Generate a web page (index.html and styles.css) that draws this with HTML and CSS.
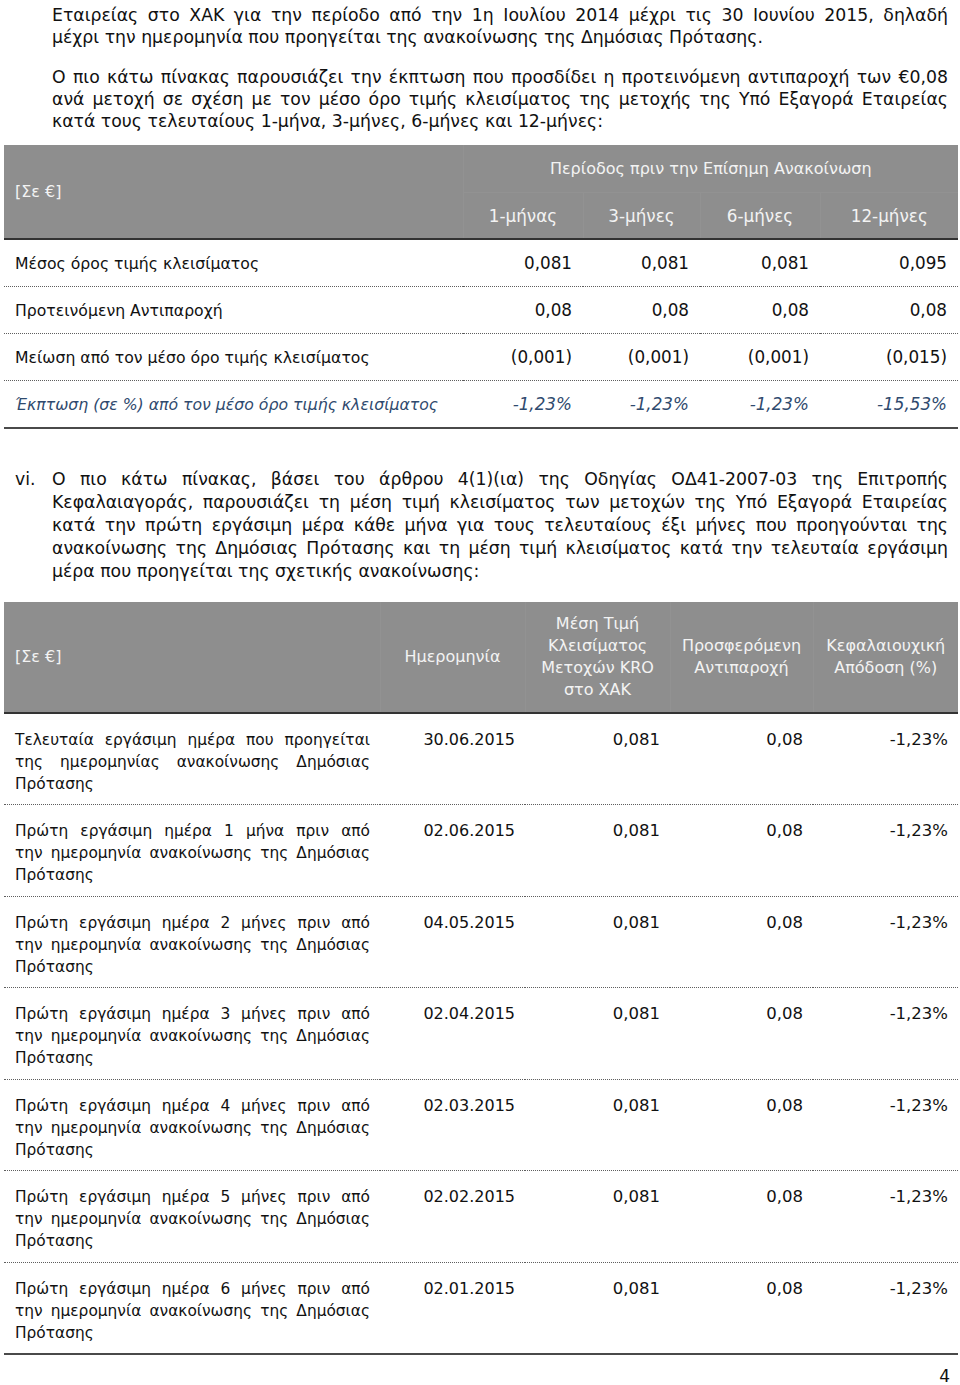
FILE: index.html
```html
<!DOCTYPE html>
<html lang="el">
<head>
<meta charset="utf-8">
<title>Πίνακες</title>
<link rel="stylesheet" href="styles.css">
</head>
<body>
<div class="page">
  <p class="para first"><span class="jline">Εταιρείας στο ΧΑΚ για την περίοδο από την 1η Ιουλίου 2014 μέχρι τις 30 Ιουνίου 2015, δηλαδή</span>μέχρι την ημερομηνία που προηγείται της ανακοίνωσης της Δημόσιας Πρότασης.</p>
  <p class="para second">Ο πιο κάτω πίνακας παρουσιάζει την έκπτωση που προσδίδει η προτεινόμενη αντιπαροχή των €0,08 ανά μετοχή σε σχέση με τον μέσο όρο τιμής κλεισίματος της μετοχής της Υπό Εξαγορά Εταιρείας κατά τους τελευταίους 1-μήνα, 3-μήνες, 6-μήνες και 12-μήνες:</p>

  <table class="t1">
    <colgroup>
      <col class="c1a"><col class="c1b"><col class="c1c"><col class="c1d"><col class="c1e">
    </colgroup>
    <thead>
      <tr class="h-top">
        <th rowspan="2" class="lbl">[Σε €]</th>
        <th colspan="4" class="period">Περίοδος πριν την Επίσημη Ανακοίνωση</th>
      </tr>
      <tr class="h-sub">
        <th>1-μήνας</th><th>3-μήνες</th><th>6-μήνες</th><th>12-μήνες</th>
      </tr>
    </thead>
    <tbody>
      <tr><td class="lbl">Μέσος όρος τιμής κλεισίματος</td><td>0,081</td><td>0,081</td><td>0,081</td><td>0,095</td></tr>
      <tr><td class="lbl">Προτεινόμενη Αντιπαροχή</td><td>0,08</td><td>0,08</td><td>0,08</td><td>0,08</td></tr>
      <tr><td class="lbl">Μείωση από τον μέσο όρο τιμής κλεισίματος</td><td>(0,001)</td><td>(0,001)</td><td>(0,001)</td><td>(0,015)</td></tr>
      <tr class="pct"><td class="lbl">Έκπτωση (σε %) από τον μέσο όρο τιμής κλεισίματος</td><td>-1,23%</td><td>-1,23%</td><td>-1,23%</td><td>-15,53%</td></tr>
    </tbody>
  </table>

  <div class="item">
    <span class="marker">vi.</span>
    <p class="item-text">Ο πιο κάτω πίνακας, βάσει του άρθρου 4(1)(ια) της Οδηγίας ΟΔ41-2007-03 της Επιτροπής Κεφαλαιαγοράς, παρουσιάζει τη μέση τιμή κλεισίματος των μετοχών της Υπό Εξαγορά Εταιρείας κατά την πρώτη εργάσιμη μέρα κάθε μήνα για τους τελευταίους έξι μήνες που προηγούνται της ανακοίνωσης της Δημόσιας Πρότασης και τη μέση τιμή κλεισίματος κατά την τελευταία εργάσιμη μέρα που προηγείται της σχετικής ανακοίνωσης:</p>
  </div>

  <table class="t2">
    <colgroup>
      <col class="c2a"><col class="c2b"><col class="c2c"><col class="c2d"><col class="c2e">
    </colgroup>
    <thead>
      <tr>
        <th class="lbl">[Σε €]</th>
        <th>Ημερομηνία</th>
        <th>Μέση Τιμή Κλεισίματος Μετοχών KRO στο ΧΑΚ</th>
        <th>Προσφερόμενη Αντιπαροχή</th>
        <th>Κεφαλαιουχική Απόδοση (%)</th>
      </tr>
    </thead>
    <tbody>
      <tr><td class="lbl">Τελευταία εργάσιμη ημέρα που προηγείται<br>της ημερομηνίας ανακοίνωσης Δημόσιας<br>Πρότασης</td><td class="date">30.06.2015</td><td>0,081</td><td>0,08</td><td>-1,23%</td></tr>
      <tr><td class="lbl">Πρώτη εργάσιμη ημέρα 1 μήνα πριν από<br>την ημερομηνία ανακοίνωσης της Δημόσιας<br>Πρότασης</td><td class="date">02.06.2015</td><td>0,081</td><td>0,08</td><td>-1,23%</td></tr>
      <tr><td class="lbl">Πρώτη εργάσιμη ημέρα 2 μήνες πριν από<br>την ημερομηνία ανακοίνωσης της Δημόσιας<br>Πρότασης</td><td class="date">04.05.2015</td><td>0,081</td><td>0,08</td><td>-1,23%</td></tr>
      <tr><td class="lbl">Πρώτη εργάσιμη ημέρα 3 μήνες πριν από<br>την ημερομηνία ανακοίνωσης της Δημόσιας<br>Πρότασης</td><td class="date">02.04.2015</td><td>0,081</td><td>0,08</td><td>-1,23%</td></tr>
      <tr><td class="lbl">Πρώτη εργάσιμη ημέρα 4 μήνες πριν από<br>την ημερομηνία ανακοίνωσης της Δημόσιας<br>Πρότασης</td><td class="date">02.03.2015</td><td>0,081</td><td>0,08</td><td>-1,23%</td></tr>
      <tr><td class="lbl">Πρώτη εργάσιμη ημέρα 5 μήνες πριν από<br>την ημερομηνία ανακοίνωσης της Δημόσιας<br>Πρότασης</td><td class="date">02.02.2015</td><td>0,081</td><td>0,08</td><td>-1,23%</td></tr>
      <tr><td class="lbl">Πρώτη εργάσιμη ημέρα 6 μήνες πριν από<br>την ημερομηνία ανακοίνωσης της Δημόσιας<br>Πρότασης</td><td class="date">02.01.2015</td><td>0,081</td><td>0,08</td><td>-1,23%</td></tr>
    </tbody>
  </table>

  <div class="pagenum">4</div>
</div>
</body>
</html>
```

FILE: styles.css
```css
html, body {
  margin: 0;
  padding: 0;
  background: #ffffff;
}

body {
  font-family: "DejaVu Sans", Verdana, sans-serif;
  color: #111111;
  font-size: 17.3px;
}

.page {
  width: 960px;
  padding-top: 4px;
}

.para {
  margin: 0 12px 0 52px;
  line-height: 22px;
  text-align: justify;
}

.para .jline {
  display: block;
  text-align: justify;
  text-align-last: justify;
}

.para.second {
  margin-top: 18px;
}

/* ---------- Table 1 ---------- */
table {
  border-collapse: collapse;
  table-layout: fixed;
  margin-left: 4px;
  width: 954px;
  font-size: 16.8px;
}

.t1 {
  margin-top: 13px;
}

.c1a { width: 459px; }
.c1b { width: 120px; }
.c1c { width: 117px; }
.c1d { width: 120px; }
.c1e { width: 138px; }

.t1 thead th {
  background: #8e8e8e;
  color: #f3f3f3;
  font-weight: normal;
  font-size: 16px;
  text-align: center;
  padding: 0;
}

.t1 .h-sub th {
  font-size: 16.8px;
}

.t1 .h-top th.lbl {
  text-align: left;
  padding-left: 11px;
  border-right: 1px solid #929292;
  border-bottom: 2px solid #333333;
}

.t1 .h-top th.period {
  height: 47px;
  border-bottom: 1px solid #929292;
}

.t1 .h-sub th {
  height: 45px;
  border-bottom: 2px solid #333333;
}

.t1 .h-sub th + th {
  border-left: 1px solid #929292;
}

.t1 tbody td {
  height: 46px;
  padding: 0 11px 0 0;
  text-align: right;
  border-bottom: 1px dotted #5e5e5e;
}

.t1 tbody td.lbl {
  text-align: left;
  padding-left: 11px;
  font-size: 15.7px;
}

.t1 tbody tr.pct td {
  color: #2f4a6e;
  font-style: italic;
  border-bottom: 2px solid #4a4a4a;
}

/* ---------- Item vi ---------- */
.item {
  display: flex;
  margin-top: 39px;
  line-height: 23px;
}

.marker {
  padding-left: 15px;
  box-sizing: border-box;
  flex: 0 0 52px;
}

.item-text {
  margin: 0 12px 0 0;
  text-align: justify;
  flex: 1;
}

/* ---------- Table 2 ---------- */
.t2 {
  margin-top: 19px;
  font-size: 16.5px;
}

.c2a { width: 376px; }
.c2b { width: 145px; }
.c2c { width: 145px; }
.c2d { width: 143px; }
.c2e { width: 145px; }

.t2 thead th {
  background: #8e8e8e;
  color: #f3f3f3;
  font-weight: normal;
  font-size: 16px;
  text-align: center;
  height: 110px;
  padding: 0 6px;
  line-height: 22px;
  border-bottom: 2px solid #333333;
}

.t2 thead th + th {
  border-left: 1px solid #929292;
}

.t2 thead th.lbl {
  text-align: left;
  padding-left: 11px;
}

.t2 tbody td {
  vertical-align: top;
  height: 91.5px;
  box-sizing: border-box;
  padding: 15px 10px 0 0;
  line-height: 22px;
  text-align: right;
  border-bottom: 1px dotted #5e5e5e;
}

.t2 tbody td.date {
  font-size: 16px;
}

.t2 tbody td.lbl {
  text-align: justify;
  text-align-last: justify;
  white-space: nowrap;
  padding-left: 11px;
  padding-right: 10px;
  font-size: 15.4px;
}

.t2 tbody tr:last-child td {
  border-bottom: 2px solid #4a4a4a;
}

.pagenum {
  text-align: right;
  padding-right: 10px;
  margin-top: 11px;
  font-size: 17px;
}
```
